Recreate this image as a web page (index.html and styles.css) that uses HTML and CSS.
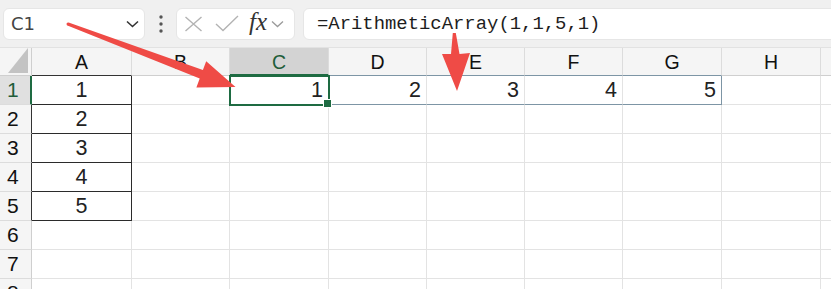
FILE: index.html
```html
<!DOCTYPE html>
<html>
<head>
<meta charset="utf-8">
<link rel="stylesheet" href="styles.css">
</head>
<body>
<div class="app">
  <div class="toolbar">
    <div class="namebox">
      <span class="nb-text">C1</span>
      <svg class="chev" width="13" height="8" viewBox="0 0 13 8"><path d="M1 1.5 L6.5 6.5 L12 1.5" fill="none" stroke="#333" stroke-width="1.6"/></svg>
    </div>
    <div class="dots">
      <svg width="4" height="18" viewBox="0 0 4 18"><circle cx="2" cy="2" r="1.7" fill="#555"/><circle cx="2" cy="9" r="1.7" fill="#555"/><circle cx="2" cy="16" r="1.7" fill="#555"/></svg>
    </div>
    <div class="fbtns">
      <svg class="ic-x" width="19" height="16" viewBox="0 0 19 16"><path d="M1.5 1 L17.5 15 M17.5 1 L1.5 15" fill="none" stroke="#b3b3b3" stroke-width="1.4"/></svg>
      <svg class="ic-ok" width="24" height="17" viewBox="0 0 24 17"><path d="M1 9 L8 15.5 L23 1" fill="none" stroke="#b3b3b3" stroke-width="1.4"/></svg>
      <span class="fx">fx</span>
      <svg class="chev2" width="13" height="8" viewBox="0 0 13 8"><path d="M1 1.5 L6.5 6.5 L12 1.5" fill="none" stroke="#9a9a9a" stroke-width="1.3"/></svg>
    </div>
    <div class="formula">=ArithmeticArray(1,1,5,1)</div>
  </div>

  <div class="grid">
    <div class="corner"><svg width="20" height="25" viewBox="0 0 20 25"><polygon points="20,0 20,25 0,25" fill="#c3c3c3"/></svg></div>
    <div class="ch dark">A</div>
    <div class="ch">B</div>
    <div class="ch sel">C</div>
    <div class="ch spill">D</div>
    <div class="ch spill">E</div>
    <div class="ch spill">F</div>
    <div class="ch spill">G</div>
    <div class="ch">H</div>
    <div class="ch last"></div>

    <div class="rh sel">1</div>
    <div class="c box num-c">1</div>
    <div class="c"></div>
    <div class="c spill active num-r">1</div>
    <div class="c spill num-r">2</div>
    <div class="c spill num-r">3</div>
    <div class="c spill num-r">4</div>
    <div class="c spill spill-end num-r">5</div>
    <div class="c"></div>
    <div class="c last"></div>

    <div class="rh dark">2</div>
    <div class="c box num-c">2</div>
    <div class="c"></div><div class="c"></div><div class="c"></div><div class="c"></div><div class="c"></div><div class="c"></div><div class="c"></div><div class="c last"></div>

    <div class="rh dark">3</div>
    <div class="c box num-c">3</div>
    <div class="c"></div><div class="c"></div><div class="c"></div><div class="c"></div><div class="c"></div><div class="c"></div><div class="c"></div><div class="c last"></div>

    <div class="rh dark">4</div>
    <div class="c box num-c">4</div>
    <div class="c"></div><div class="c"></div><div class="c"></div><div class="c"></div><div class="c"></div><div class="c"></div><div class="c"></div><div class="c last"></div>

    <div class="rh dark">5</div>
    <div class="c box num-c">5</div>
    <div class="c"></div><div class="c"></div><div class="c"></div><div class="c"></div><div class="c"></div><div class="c"></div><div class="c"></div><div class="c last"></div>

    <div class="rh">6</div>
    <div class="c"></div><div class="c"></div><div class="c"></div><div class="c"></div><div class="c"></div><div class="c"></div><div class="c"></div><div class="c"></div><div class="c last"></div>

    <div class="rh">7</div>
    <div class="c"></div><div class="c"></div><div class="c"></div><div class="c"></div><div class="c"></div><div class="c"></div><div class="c"></div><div class="c"></div><div class="c last"></div>

    <div class="rh">8</div>
    <div class="c"></div><div class="c"></div><div class="c"></div><div class="c"></div><div class="c"></div><div class="c"></div><div class="c"></div><div class="c"></div><div class="c last"></div>
  </div>

  <svg class="arrows" width="831" height="289" viewBox="0 0 831 289">
    <polygon fill="#ef4b46" points="68.6,22.4 202.9,70.1 206.2,61.2 235.5,87 196.4,87.6 199.7,78.5 67.4,25.6"/>
    <circle cx="68" cy="24" r="1.5" fill="#ef4b46"/>
    <polygon fill="#ef4b46" points="452.8,33 455.8,33 459.5,54 470,53 457,91 442,54 451,54"/>
  </svg>
</div>
</body>
</html>
```

FILE: styles.css
```css
* { box-sizing: border-box; }
html, body { margin: 0; padding: 0; }
body {
  width: 831px;
  height: 289px;
  overflow: hidden;
  background: #ffffff;
  font-family: "Liberation Sans", Arial, sans-serif;
  color: #222;
}
.app { position: relative; width: 831px; height: 289px; overflow: hidden; }

.toolbar {
  height: 48px;
  background: #f0f0f0;
  display: flex;
  align-items: center;
  padding: 0 0 0 3px;
  border-bottom: 1px solid #e2e2e2;
}
.namebox {
  width: 142px;
  height: 32px;
  background: #fff;
  border-radius: 6px;
  display: flex;
  align-items: center;
  justify-content: space-between;
  padding: 0 5px 0 7px;
  border: 1px solid #e6e6e6;
}
.nb-text {
  font-family: "DejaVu Sans", sans-serif;
  font-size: 18px;
  color: #444;
}
.dots {
  width: 31px;
  height: 32px;
  display: flex;
  align-items: center;
  justify-content: center;
}
.fbtns {
  width: 119px;
  height: 32px;
  background: #fff;
  border-radius: 6px;
  border: 1px solid #e6e6e6;
  display: flex;
  align-items: center;
  padding: 0 0 0 7px;
}
.ic-x { margin-right: 12px; }
.ic-ok { margin-right: 10px; }
.fx {
  font-family: "Liberation Serif", serif;
  font-style: italic;
  font-size: 25px;
  color: #333;
  margin-right: 4px;
  margin-top: -3px;
}
.chev2 { margin-top: 1px; }
.formula {
  flex: 1;
  height: 32px;
  margin-left: 8px;
  margin-right: -8px;
  background: #fff;
  border-radius: 6px;
  border: 1px solid #e6e6e6;
  display: flex;
  align-items: center;
  padding-left: 13px;
  font-family: "Liberation Mono", monospace;
  font-size: 18.9px;
  color: #1d1d1d;
}

.grid {
  display: grid;
  grid-template-columns: 32px 100px 98px 99px 98px 98px 98px 99px 99px 1fr;
  grid-template-rows: 28px repeat(8, 29px);
}
.corner {
  background: #f5f5f5;
  border-right: 1px solid #cfcfcf;
  border-bottom: 1px solid #cfcfcf;
  display: flex;
  align-items: flex-end;
  justify-content: flex-end;
  padding: 0 3px 2px 0;
}
.ch {
  background: #f5f5f5;
  border-right: 1px solid #dcdcdc;
  border-bottom: 1px solid #cfcfcf;
  display: flex;
  align-items: center;
  justify-content: center;
  font-size: 19.5px;
  color: #111;
  padding-top: 2px;
}
.ch.dark { border-bottom-color: #333; }
.ch.spill { border-bottom-color: #7d95a5; }
.ch.sel {
  background: #d3d3d3;
  color: #1f5d3a;
  border-bottom: 2px solid #1e6b42;
}
.ch.last, .c.last { border-right: none; }

.rh {
  background: #f5f5f5;
  border-right: 1px solid #cfcfcf;
  border-bottom: 1px solid #dcdcdc;
  display: flex;
  align-items: center;
  padding-left: 7px;
  font-size: 21px;
  color: #111;
}
.rh.dark { border-right-color: #333; }
.rh.sel {
  background: #e0e0e0;
  border-right: 2px solid #1e6b42;
  color: #1f5d3a;
}

.c {
  border-right: 1px solid #e3e3e3;
  border-bottom: 1px solid #e3e3e3;
  display: flex;
  align-items: center;
  font-size: 21.5px;
  color: #222;
  padding-top: 1px;
}
.c.box {
  border-right-color: #2b2b2b;
  border-bottom-color: #2b2b2b;
}
.c.spill { border-bottom-color: #7d95a5; }
.c.spill-end { border-right-color: #7d95a5; }
.num-c { justify-content: center; }
.num-r { justify-content: flex-end; padding-right: 5px; }
.c.active {
  position: relative;
  z-index: 2;
  outline: 2px solid #1e6b42;
  outline-offset: -1px;
}
.c.active::after {
  content: "";
  position: absolute;
  right: -4px;
  bottom: -4px;
  width: 7px;
  height: 7px;
  background: #1e6b42;
  border: 1px solid #fff;
}

.arrows {
  position: absolute;
  left: 0;
  top: 0;
  z-index: 10;
  pointer-events: none;
}
```
